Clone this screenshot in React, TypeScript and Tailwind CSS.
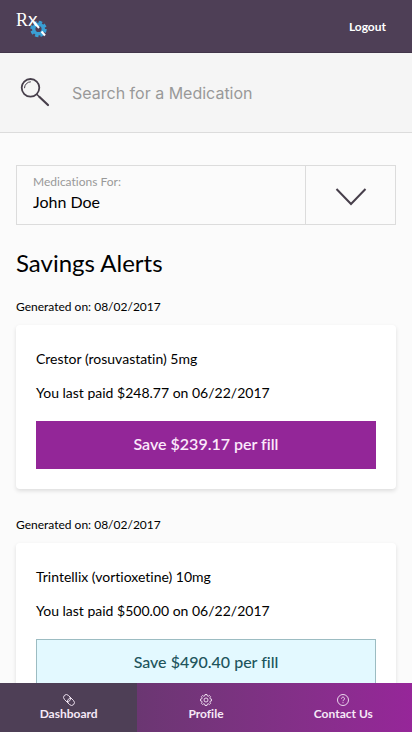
import { useState } from 'react';
import clsx from 'clsx';

type SavingsAlert = {
  id: string;
  generatedOn: string;
  medication: string;
  lastPaid: string;
  paidOn: string;
  savings: string;
  highlighted: boolean;
};

const alerts: SavingsAlert[] = [
  {
    id: 'crestor',
    generatedOn: '08/02/2017',
    medication: 'Crestor (rosuvastatin) 5mg',
    lastPaid: '$248.77',
    paidOn: '06/22/2017',
    savings: '$239.17',
    highlighted: true,
  },
  {
    id: 'trintellix',
    generatedOn: '08/02/2017',
    medication: 'Trintellix (vortioxetine) 10mg',
    lastPaid: '$500.00',
    paidOn: '06/22/2017',
    savings: '$490.40',
    highlighted: false,
  },
];

function Logo() {
  return (
    <svg width="40" height="44" viewBox="0 0 40 44" role="img" aria-label="Rx home">
      {/* Cog */}
      <g stroke="#3a9fd4" fill="none">
        <circle cx="22.500" cy="25" r="4.800" strokeWidth="3.400" />
        <circle cx="22.500" cy="25" r="6.900" strokeWidth="2.600" strokeDasharray="3.400 2.020" />
      </g>
      <text x="0" y="22" fontSize="18" fill="#fff" fontFamily="Liberation Serif, serif">
        R<tspan fontSize="19" fontFamily="Lato, sans-serif">x</tspan>
      </text>
      <path d="M18 18L23 24" stroke="#fff" strokeWidth="2" />
      <path d="M25.500 27.500L29 31.500" stroke="#fff" strokeWidth="2" />
    </svg>
  );
}

function SearchIcon() {
  return (
    <svg width="30" height="30" viewBox="0 0 30 30" fill="none" stroke="#473f4b" strokeLinecap="round" aria-hidden="true">
      <circle cx="10.500" cy="9.800" r="8.800" strokeWidth="1.800" />
      <path d="M4.500 9.800a6 6 0 0 1 6-6" strokeWidth="1" />
      <path d="M17 16.500l2.500 2.500" strokeWidth="1.500" />
      <path d="M19.500 19L28 27" strokeWidth="2.200" />
    </svg>
  );
}

function PillIcon() {
  return (
    <svg width="12" height="12" viewBox="0 0 12 12" fill="none" stroke="currentColor" strokeWidth="0.900" aria-hidden="true">
      <g transform="rotate(45 6 6)">
        <rect x="-0.500" y="3.200" width="13" height="5.600" rx="2.800" />
        <path d="M4.200 3.200a2.800 2.800 0 0 1 2.800 2.800a2.800 2.800 0 0 1-1.300 2.400" />
        <path d="M7.800 8.800a2.800 2.800 0 0 1-2.800-2.800a2.800 2.800 0 0 1 1.300-2.400" />
      </g>
    </svg>
  );
}

function GearIcon() {
  return (
    <svg width="12" height="12" viewBox="0 0 12 12" fill="none" stroke="currentColor" strokeWidth="0.900" strokeLinejoin="round" aria-hidden="true">
      <path d="M5 .5h2l.3 1.400.9.4L9.400 1.500l1.200 1.200-.8 1.200.4.9 1.300.3v1.800l-1.300.3-.4.9.8 1.200-1.200 1.200-1.200-.8-.9.4L7 11.500H5l-.3-1.400-.9-.4-1.200.8-1.200-1.200.8-1.200-.4-.9L.5 6.900V5.100l1.300-.3.4-.9-.8-1.200 1.200-1.200 1.200.8.9-.4z" />
      <circle cx="6" cy="6" r="2" />
    </svg>
  );
}

function HelpIcon() {
  return (
    <svg width="12" height="12" viewBox="0 0 12 12" fill="none" stroke="currentColor" strokeWidth="0.900" aria-hidden="true">
      <circle cx="6" cy="6" r="5.500" />
      <path d="M4.500 4.600a1.500 1.500 0 1 1 2.300 1.300c-.5.3-.8.6-.8 1.300" />
      <path d="M6 8.200v1" />
    </svg>
  );
}

const navItems = [
  { label: 'Dashboard', icon: PillIcon },
  { label: 'Profile', icon: GearIcon },
  { label: 'Contact Us', icon: HelpIcon },
];

function AlertCard({ alert }: { alert: SavingsAlert }) {
  return (
    <section className="mb-6.5">
      <p className="mb-2 text-xs leading-5">Generated on: {alert.generatedOn}</p>
      <div className="rounded-sm bg-white px-5 pt-6 pb-5 shadow-[0_2px_4px_rgba(0,0,0,0.12)]">
        <h3 className="text-sm">{alert.medication}</h3>
        <p className="mt-3.5 text-sm">
          You last paid {alert.lastPaid} on {alert.paidOn}
        </p>
        <button
          type="button"
          className={clsx(
            'mt-4.5 h-12 w-full border pb-0.5 text-base',
            alert.highlighted
              ? 'border-[#932698] bg-[#932698] font-semibold text-[#fbe9fb]'
              : 'border-[#9cbcc2] bg-[#e3f9ff] font-medium text-[#20545c]'
          )}
        >
          Save {alert.savings} per fill
        </button>
      </div>
    </section>
  );
}

export default function App() {
  const [query, setQuery] = useState('');
  const [activeTab, setActiveTab] = useState('Dashboard');

  return (
    <div className="flex h-screen flex-col bg-[#fbfbfb] font-[Lato,sans-serif] text-black [font-variant-ligatures:none]">
      {/* Header */}
      <header className="flex h-[53px] shrink-0 items-center justify-between border-b border-[#42354a] bg-[#4e3f56] pr-6.5 pl-4">
        <Logo />
        <button type="button" className="pt-0.5 text-xs font-bold text-white">
          Logout
        </button>
      </header>

      <main className="flex-1 overflow-y-auto [scrollbar-width:none]">
        {/* Search */}
        <label className="flex h-20 items-center gap-5.5 border-b border-[#dcdcdc] bg-[#f5f5f5] pl-5">
          <SearchIcon />
          <input
            type="search"
            value={query}
            onChange={(e) => setQuery(e.target.value)}
            aria-label="Search for a Medication"
            placeholder="Search for a Medication"
            className="min-w-0 flex-1 font-[Inter,sans-serif] text-base text-[#473f4b] outline-none placeholder:text-[#999]"
          />
        </label>

        <div className="px-4 pt-8">
          {/* Member picker */}
          <div className="grid h-15 grid-cols-[1fr_90px] border border-[#dcdcdc]">
            <label htmlFor="member" className="pointer-events-none col-start-1 row-start-1 pt-2 pl-4 text-xs text-[#999]">
              Medications For:
            </label>
            <select id="member" className="col-span-2 col-start-1 row-start-1 appearance-none bg-transparent pt-3.5 pl-4 text-base outline-none">
              <option>John Doe</option>
            </select>
            <span className="pointer-events-none col-start-2 row-start-1 flex items-center justify-center border-l border-[#dcdcdc] pt-1">
              <svg width="32" height="18" viewBox="0 0 32 18" fill="none" stroke="#473f4b" strokeWidth="2" aria-hidden="true">
                <path d="M1.500 1l14.500 15L30.500 1" />
              </svg>
            </span>
          </div>

          <h1 className="mt-5.5 mb-4.5 text-2xl">Savings Alerts</h1>
          {alerts.map((alert) => (
            <AlertCard key={alert.id} alert={alert} />
          ))}
        </div>
      </main>

      {/* Tab bar */}
      <nav className="grid h-[49px] shrink-0 grid-cols-3 bg-linear-to-r from-[#55395f] to-[#962699]">
        {navItems.map(({ label, icon: Icon }) => (
          <button
            key={label}
            type="button"
            onClick={() => setActiveTab(label)}
            className={clsx(
              'flex flex-col items-center justify-center pt-0.5 pb-0.5 text-xs font-bold text-[#f6e9f7]',
              activeTab === label && 'bg-[#4e3f56]'
            )}
          >
            <Icon />
            {label}
          </button>
        ))}
      </nav>
    </div>
  );
}
